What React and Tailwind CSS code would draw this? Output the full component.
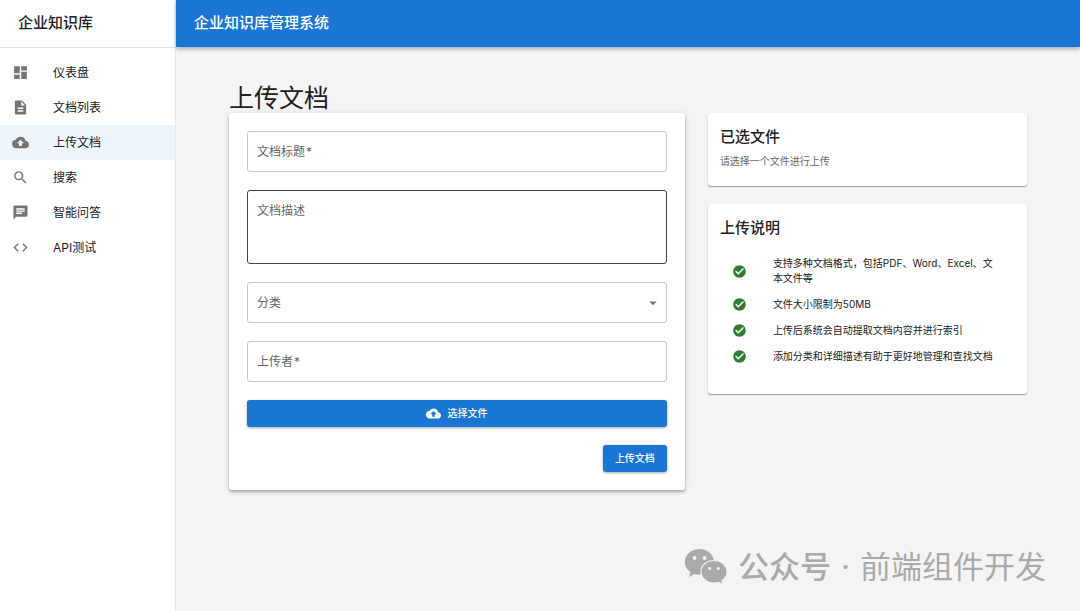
import React, { useRef, useState } from "react";
import {
  MdDashboard,
  MdDescription,
  MdCloudUpload,
  MdSearch,
  MdChat,
  MdCode,
  MdCheckCircle,
  MdArrowDropDown,
} from "react-icons/md";

const menuItems = [
  { text: "仪表盘", icon: MdDashboard, path: "#dashboard" },
  { text: "文档列表", icon: MdDescription, path: "#documents" },
  { text: "上传文档", icon: MdCloudUpload, path: "#upload" },
  { text: "搜索", icon: MdSearch, path: "#search" },
  { text: "智能问答", icon: MdChat, path: "#qa" },
  { text: "API测试", icon: MdCode, path: "#api-test" },
];

const tips = [
  "支持多种文档格式，包括PDF、Word、Excel、文本文件等",
  "文件大小限制为50MB",
  "上传后系统会自动提取文档内容并进行索引",
  "添加分类和详细描述有助于更好地管理和查找文档",
];

const categories = ["技术文档", "产品文档", "规章制度", "其他"];

const fieldClass =
  "block w-full rounded-[3px] border bg-transparent px-[10px] text-xs text-[#212121] outline-none focus:border-[#1976d2]";

// label sits inside the empty field and moves onto the border once there is a value
const Field = ({ id, label, required, filled, children }) => (
  <div className="relative">
    {children}
    <label
      htmlFor={id}
      className={
        filled
          ? "pointer-events-none absolute left-2 -top-2 bg-white px-1 text-[10px] leading-4 text-[#666666]"
          : "pointer-events-none absolute left-[10px] top-[13px] text-xs leading-4 text-[#666666]"
      }
    >
      {label}
      {required && <span className="ml-px">*</span>}
    </label>
  </div>
);

const WechatIcon = () => (
  <svg width="44" height="36" viewBox="0 0 44 36" fill="currentColor" aria-hidden="true">
    <path d="M15.5 0C7.3 0 .8 5.8.8 13c0 4.1 2.1 7.700 5.500 10.100L5 28l5.400-3c1.600.5 3.300.7 5.100.7 8.100 0 14.600-5.700 14.600-12.700S23.600 0 15.500 0z" />
    <path
      d="M30 11.500c-7.300 0-13.100 5-13.100 11.200S22.700 34 30 34c1.600 0 3.200-.3 4.600-.7L39 35.500l-1-4.100c3.100-2 5.100-5.100 5.100-8.700 0-6.200-5.900-11.200-13.100-11.200z"
      stroke="#f4f4f4"
      strokeWidth="1.2"
    />
    <g fill="#f4f4f4">
      <circle cx="10.5" cy="9" r="1.9" />
      <circle cx="20.6" cy="9" r="1.9" />
      <circle cx="25.7" cy="19.5" r="1.6" />
      <circle cx="34.3" cy="19.5" r="1.6" />
    </g>
  </svg>
);

const Sidebar = () => (
  <aside className="flex w-44 shrink-0 flex-col border-r border-[#e8e8e8] bg-white">
    <div className="flex h-12 items-center border-b border-[#e0e0e0] px-[18px]">
      <span className="text-[15px] font-medium">企业知识库</span>
    </div>
    <nav className="flex flex-col py-[7px]">
      {menuItems.map((item) => {
        const Icon = item.icon;
        return (
          <a
            key={item.path}
            href={item.path}
            className={`flex h-[35px] items-center pl-3 text-xs ${
              item.path === "#upload" ? "bg-[#edf4fb]" : "hover:bg-[#f5f5f5]"
            }`}
          >
            <span className="w-[41px] text-[#757575]">
              <Icon size={17} />
            </span>
            {item.text}
          </a>
        );
      })}
    </nav>
  </aside>
);

const UploadForm = ({ onFile }) => {
  const fileRef = useRef(null);
  const [form, setForm] = useState({ title: "", description: "", category: "", uploader: "" });

  const handleChange = (e) => {
    setForm({ ...form, [e.target.name]: e.target.value });
  };

  return (
    <form
      onSubmit={(e) => e.preventDefault()}
      className="flex flex-col gap-[18px] rounded-[3px] bg-white p-[18px] shadow-[0_2px_3px_rgba(0,0,0,0.26),0_1px_6px_rgba(0,0,0,0.12)]"
    >
      <Field id="title" label="文档标题" required filled={form.title}>
        <input
          id="title"
          name="title"
          type="text"
          value={form.title}
          onChange={handleChange}
          className={`${fieldClass} h-[41px] border-[#c8c8c8]`}
        />
      </Field>
      <Field id="description" label="文档描述" filled={form.description}>
        <textarea
          id="description"
          name="description"
          value={form.description}
          onChange={handleChange}
          className={`${fieldClass} h-[74px] resize-none border-[#424242] py-3`}
        />
      </Field>
      <Field id="category" label="分类" filled={form.category}>
        <select
          id="category"
          name="category"
          value={form.category}
          onChange={handleChange}
          className={`${fieldClass} h-[41px] appearance-none border-[#c8c8c8]`}
        >
          <option value=""></option>
          {categories.map((c) => (
            <option key={c} value={c}>
              {c}
            </option>
          ))}
        </select>
        <MdArrowDropDown
          size={18}
          className="pointer-events-none absolute right-[5px] top-3 text-[#757575]"
        />
      </Field>
      <Field id="uploader" label="上传者" required filled={form.uploader}>
        <input
          id="uploader"
          name="uploader"
          type="text"
          value={form.uploader}
          onChange={handleChange}
          className={`${fieldClass} h-[41px] border-[#c8c8c8]`}
        />
      </Field>

      <button
        type="button"
        onClick={() => fileRef.current.click()}
        className="flex h-[27px] items-center justify-center gap-[6px] rounded-[3px] bg-[#1976d2] text-[10px] font-medium text-white shadow-[0_1px_3px_rgba(0,0,0,0.35)] hover:bg-[#1565c0]"
      >
        <MdCloudUpload size={15} />
        选择文件
      </button>
      <input
        ref={fileRef}
        type="file"
        aria-label="选择文件"
        className="hidden"
        onChange={(e) => onFile(e.target.files[0])}
      />

      <button
        type="submit"
        className="h-[27px] self-end rounded-[3px] bg-[#1976d2] px-3 text-[10px] font-medium text-white shadow-[0_1px_3px_rgba(0,0,0,0.35)] hover:bg-[#1565c0]"
      >
        上传文档
      </button>
    </form>
  );
};

const Card = ({ title, className, children }) => (
  <section
    className={`rounded-[3px] bg-white px-3 pt-3 shadow-[0_1px_1px_rgba(0,0,0,0.28),0_1px_2px_rgba(0,0,0,0.12)] ${className}`}
  >
    <h2 className="text-[15px] font-medium leading-6">{title}</h2>
    {children}
  </section>
);

const App = () => {
  const [file, setFile] = useState(null);

  return (
    <div className="flex min-h-screen bg-[#f4f4f4] font-[Inter,'Noto_Sans_CJK_SC',sans-serif] text-[#212121]">
      <Sidebar />
      <div className="flex min-w-0 flex-1 flex-col">
        <header className="flex h-[47px] items-center bg-[#1976d2] px-[18px] text-white shadow-[0_2px_4px_rgba(0,0,0,0.3)]">
          <span className="text-[15px] font-medium">企业知识库管理系统</span>
        </header>

        <main className="px-[53px] pt-9">
          <h1 className="text-[25px] leading-[30px]">上传文档</h1>
          <div className="grid grid-cols-[10fr_7fr] items-start gap-[23px]">
            <UploadForm onFile={setFile} />
            <div className="flex flex-col gap-[18px]">
              <Card title="已选文件" className="pb-[17px]">
                <p className="mt-1 text-[10px] leading-4 text-[#666666]">
                  {file ? file.name : "请选择一个文件进行上传"}
                </p>
              </Card>
              <Card title="上传说明" className="pb-[30px]">
                <ul className="flex flex-col gap-[11px] px-3 pt-4">
                  {tips.map((tip) => (
                    <li key={tip} className="flex items-center text-[10px] leading-[15px]">
                      <span className="w-[41px] shrink-0 text-[#2e7d32]">
                        <MdCheckCircle size={15} />
                      </span>
                      <span className="pr-1">{tip}</span>
                    </li>
                  ))}
                </ul>
              </Card>
            </div>
          </div>
        </main>

        <footer className="mt-auto flex items-center justify-end gap-[10px] pb-6 pr-[34px] text-[31px] leading-10 text-[#aaaaaa]">
          <WechatIcon />
          <span className="font-medium">公众号</span>
          <span>·</span>
          <span>前端组件开发</span>
        </footer>
      </div>
    </div>
  );
};

export default App;
